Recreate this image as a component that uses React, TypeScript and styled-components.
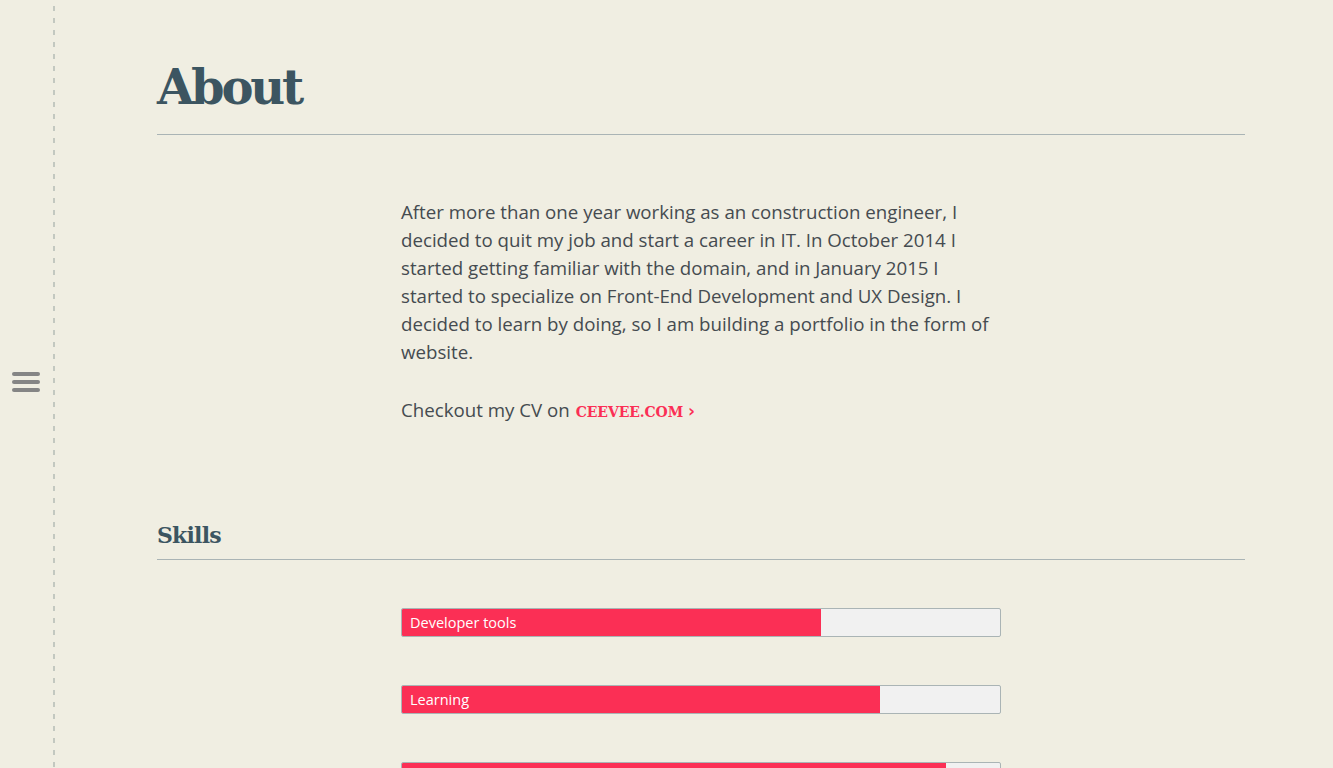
import React from "react";
import styled, { createGlobalStyle } from "styled-components";

const Global = createGlobalStyle`
  html, body { margin: 0; padding: 0; background: #f0eee2; }
  body { font-family: "Open Sans", Lato, sans-serif; color: #434a4f; }
  * { box-sizing: border-box; }
`;

const Page = styled.div`
  display: flex;
  min-height: 100vh;
  height: 768px;
  overflow: hidden;
`;

const Sidebar = styled.aside`
  width: 55px;
  flex: none;
  display: flex;
  align-items: center;
  justify-content: flex-start;
  padding-left: 12px;
  background-image: linear-gradient(to bottom, #c3c8c0 0 5px, transparent 5px 12px);
  background-size: 2px 12px;
  background-repeat: repeat-y;
  background-position: 53px 6px;
`;

const Burger = styled.button`
  display: flex;
  flex-direction: column;
  gap: 4px;
  border: 0;
  background: none;
  padding: 0;
  margin-top: -4px;
  cursor: pointer;
  span {
    display: block;
    width: 28px;
    height: 4px;
    border-radius: 2px;
    background: #858585;
  }
`;

const Main = styled.main`
  flex: 1;
  padding: 54px 88px 0 102px;
`;

const Title = styled.h1`
  margin: 0;
  font-family: "DejaVu Serif", serif;
  font-weight: bold;
  font-size: 48px;
  line-height: 66px;
  color: #3c5561;
  letter-spacing: -3.2px;
  padding-bottom: 14px;
  border-bottom: 1px solid #aab4b5;
`;

const SubTitle = styled.h2`
  margin: 0;
  font-family: "DejaVu Serif", serif;
  font-weight: bold;
  font-size: 22px;
  line-height: 30px;
  color: #3c5561;
  letter-spacing: -0.8px;
  padding-bottom: 9px;
  border-bottom: 1px solid #aab4b5;
`;

const Body = styled.div`
  margin: 0 0 0 244px;
  width: 600px;
`;

const Para = styled.p`
  margin: 0;
  font-size: 18.7px;
  line-height: 28px;
  color: #454b50;
`;

const AboutBody = styled(Body)`
  padding-top: 63px;
  padding-bottom: 94px;
`;

const CvLine = styled(Para)`
  margin-top: 30px;
  display: flex;
  align-items: baseline;
  gap: 6px;
`;

const Link = styled.a`
  display: inline-flex;
  align-items: baseline;
  gap: 5px;
  font-family: "DejaVu Serif", serif;
  font-weight: bold;
  font-size: 14px;
  color: #fb2f55;
  text-decoration: none;
  letter-spacing: -0.1px;
`;

const Chevron = styled.span`
  font-family: "DejaVu Sans", sans-serif;
  font-weight: bold;
  font-size: 17px;
  line-height: 1;
`;

const Skills = styled(Body)`
  padding-top: 48px;
  display: flex;
  flex-direction: column;
  gap: 48px;
`;

const Bar = styled.div`
  height: 29px;
  border: 1px solid #aab4b5;
  border-radius: 2px;
  background: #f1f1f1;
  overflow: hidden;
`;

const Fill = styled.div`
  height: 100%;
  background: #fb2f55;
  color: #fff;
  font-size: 14.5px;
  line-height: 27px;
  padding-left: 8px;
  white-space: nowrap;
`;

const skills = [
  { name: "Developer tools", pct: 70 },
  { name: "Learning", pct: 80 },
  { name: "", pct: 91 },
];

export default function App() {
  return (
    <>
      <Global />
      <Page>
        <Sidebar>
          <Burger aria-label="menu">
            <span />
            <span />
            <span />
          </Burger>
        </Sidebar>
        <Main>
          <Title>About</Title>
          <AboutBody>
            <Para>
              After more than one year working as an construction engineer, I decided to quit my job and start a
              career in IT. In October 2014 I started getting familiar with the domain, and in January 2015 I
              started to specialize on Front-End Development and UX Design. I decided to learn by doing, so I am
              building a portfolio in the form of website.
            </Para>
            <CvLine>
              Checkout my CV on{" "}
              <Link href="#">
                CEEVEE.COM <Chevron>›</Chevron>
              </Link>
            </CvLine>
          </AboutBody>
          <SubTitle>Skills</SubTitle>
          <Skills>
            {skills.map((s, i) => (
              <Bar key={i}>
                <Fill style={{ width: `${s.pct}%` }}>{s.name}</Fill>
              </Bar>
            ))}
          </Skills>
        </Main>
      </Page>
    </>
  );
}
